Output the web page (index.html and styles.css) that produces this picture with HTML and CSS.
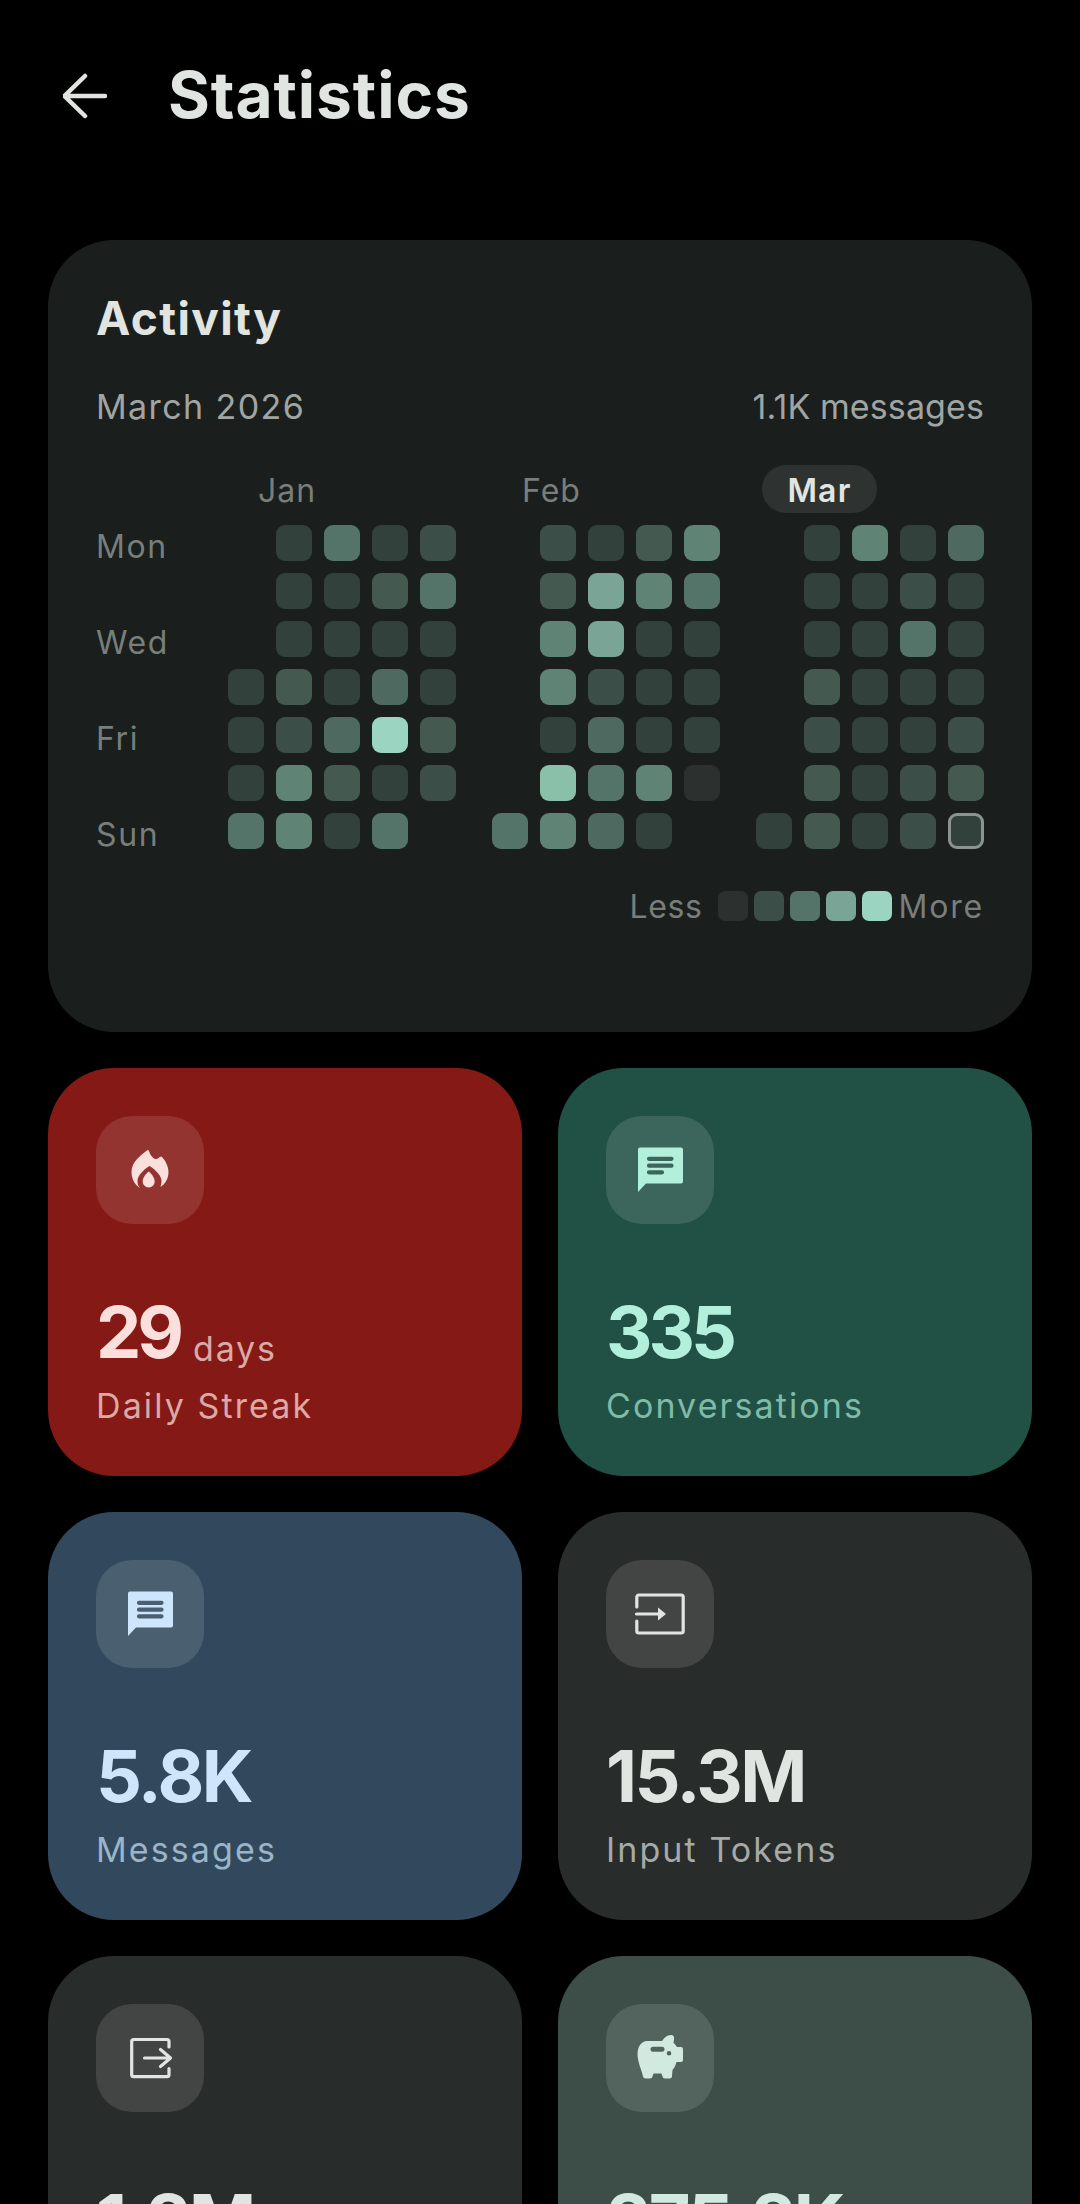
FILE: index.html
```html
<!DOCTYPE html>
<html lang="en">
<head>
  <meta charset="UTF-8" />
  <meta name="viewport" content="width=device-width, initial-scale=1.0" />
  <title>Statistics</title>
  <link rel="stylesheet" href="styles.css">
</head>
<body>
  <header class="topbar">
    <svg class="back" viewBox="0 0 48 48"><path d="M42 24H2M22 4 1.500 24 22 44" /></svg>
    <h1>Statistics</h1>
  </header>

  <section class="activity">
    <h2>Activity</h2>
    <div class="sub"><span class="date">March 2026</span><span>1.1K messages</span></div>

    <div class="heat">
      <div class="days">
        <span>Mon</span><span></span><span>Wed</span><span></span><span>Fri</span><span></span><span>Sun</span>
      </div>
      <div class="month">
        <div class="month-name">Jan</div>
        <div class="weeks">
          <i></i><i></i><i></i><i class="l1"></i><i class="l1"></i><i class="l1"></i><i class="l5"></i>
          <i class="l1"></i><i class="l1"></i><i class="l1"></i><i class="l3"></i><i class="l2"></i><i class="l6"></i><i class="l6"></i>
          <i class="l5"></i><i class="l1"></i><i class="l1"></i><i class="l1"></i><i class="l4"></i><i class="l3"></i><i class="l1"></i>
          <i class="l1"></i><i class="l3"></i><i class="l1"></i><i class="l4"></i><i class="l9"></i><i class="l1"></i><i class="l5"></i>
          <i class="l2"></i><i class="l5"></i><i class="l1"></i><i class="l1"></i><i class="l3"></i><i class="l2"></i><i></i>
        </div>
      </div>
      <div class="month">
        <div class="month-name">Feb</div>
        <div class="weeks">
          <i></i><i></i><i></i><i></i><i></i><i></i><i class="l5"></i>
          <i class="l2"></i><i class="l3"></i><i class="l6"></i><i class="l6"></i><i class="l1"></i><i class="l8"></i><i class="l6"></i>
          <i class="l1"></i><i class="l7"></i><i class="l7"></i><i class="l2"></i><i class="l4"></i><i class="l5"></i><i class="l4"></i>
          <i class="l3"></i><i class="l6"></i><i class="l1"></i><i class="l1"></i><i class="l1"></i><i class="l6"></i><i class="l1"></i>
          <i class="l6"></i><i class="l5"></i><i class="l1"></i><i class="l1"></i><i class="l1"></i><i class="l0"></i><i></i>
        </div>
      </div>
      <div class="month">
        <div class="month-name current"><span>Mar</span></div>
        <div class="weeks">
          <i></i><i></i><i></i><i></i><i></i><i></i><i class="l1"></i>
          <i class="l1"></i><i class="l1"></i><i class="l1"></i><i class="l3"></i><i class="l2"></i><i class="l3"></i><i class="l3"></i>
          <i class="l6"></i><i class="l1"></i><i class="l1"></i><i class="l1"></i><i class="l1"></i><i class="l1"></i><i class="l1"></i>
          <i class="l1"></i><i class="l2"></i><i class="l5"></i><i class="l1"></i><i class="l1"></i><i class="l2"></i><i class="l2"></i>
          <i class="l4"></i><i class="l1"></i><i class="l1"></i><i class="l1"></i><i class="l2"></i><i class="l3"></i><i class="l1 today"></i>
        </div>
      </div>
    </div>

    <div class="legend">
      <span class="less">Less</span>
      <i class="l0"></i><i class="l2"></i><i class="l5"></i><i class="l7"></i><i class="l9"></i>
      <span class="more">More</span>
    </div>
  </section>

  <section class="stats">
    <div class="stat red">
      <div class="icon">
        <svg viewBox="0 0 48 48"><path d="M21.5 4C23 4 23.5 6 24 8C26 11 28 13 30 13C32 13 33 11 35.5 10.5C39 14 42.5 20 42.5 26C42.5 33 39 38 34.5 41C35 39 35.5 37 35.5 35C35.5 30 30 24 23.5 20C17 24 11.5 30 11.5 35C11.5 37.5 12 40 14 42C9 39 5.5 33 5.5 26C5.5 16 14 10 21.5 4z" /><path d="M22.7 25.5C26 28 28.7 32 28.7 35.5a6 6 0 0 1-12 0C16.7 32 19.5 28 22.7 25.5z" /></svg>
      </div>
      <div class="value tight">29<small>days</small></div>
      <div class="label">Daily Streak</div>
    </div>
    <div class="stat green">
      <div class="icon">
        <svg viewBox="0 0 48 48"><path fill-rule="evenodd" d="M2 3.5a2 2 0 0 1 2-2h41a2 2 0 0 1 2 2v32a2 2 0 0 1-2 2H10L2 46zM13 10.7a2.1 2.1 0 0 0 0 4.2h22.500a2.1 2.1 0 0 0 0-4.200zM13 17.600a2.1 2.1 0 0 0 0 4.200h22.500a2.1 2.1 0 0 0 0-4.200zM13 24.200a2.1 2.1 0 0 0 0 4.200h13a2.1 2.1 0 0 0 0-4.200z" /></svg>
      </div>
      <div class="value tight">335</div>
      <div class="label">Conversations</div>
    </div>
    <div class="stat blue">
      <div class="icon">
        <svg viewBox="0 0 48 48"><path fill-rule="evenodd" d="M2 3.5a2 2 0 0 1 2-2h41a2 2 0 0 1 2 2v32a2 2 0 0 1-2 2H10L2 46zM13 10.7a2.1 2.1 0 0 0 0 4.2h22.500a2.1 2.1 0 0 0 0-4.200zM13 17.600a2.1 2.1 0 0 0 0 4.200h22.500a2.1 2.1 0 0 0 0-4.200zM13 24.200a2.1 2.1 0 0 0 0 4.200h22.500a2.1 2.1 0 0 0 0-4.200z" /></svg>
      </div>
      <div class="value">5.8K</div>
      <div class="label">Messages</div>
    </div>
    <div class="stat grey">
      <div class="icon">
        <svg class="line" viewBox="0 0 48 48"><path d="M.8 17V7a2 2 0 0 1 2-2h42.400a2 2 0 0 1 2 2v34a2 2 0 0 1-2 2H2.800a2 2 0 0 1-2-2V31M.5 24H22" /><path class="tip" d="M22 17.500l8 6.500-8 6.500z" /></svg>
      </div>
      <div class="value">15.3M</div>
      <div class="label">Input Tokens</div>
    </div>
    <div class="stat grey">
      <div class="icon">
        <svg class="line" viewBox="0 0 48 48"><path d="M43 13V7.500a2 2 0 0 0-2-2H7.700a2 2 0 0 0-2 2v33.200a2 2 0 0 0 2 2H41a2 2 0 0 0 2-2V34.500M18.500 24H44M34.500 15.500 44.500 24l-10 8.500" /></svg>
      </div>
      <div class="value">1.2M</div>
    </div>
    <div class="stat sage">
      <div class="icon">
        <svg viewBox="0 0 48 48"><path fill-rule="evenodd" d="M11 7H26C28 4 31 1 35 1C37.500 1 38.500 3 38 5L37.500 9C39 10 40 11.500 41 13H45a2 2 0 0 1 2 2V26a2 2 0 0 1-2 2H40.500C39.500 31 38.500 34 36.500 36L36 42a2.500 2.500 0 0 1-2.500 2.500H29a2.500 2.500 0 0 1-2.500-2L25.500 39.500H17.500L16.500 42.500a2.500 2.500 0 0 1-2.500 2H9.500a2.500 2.500 0 0 1-2.500-2C6 37 1.500 28 1.500 20C1.500 12 6 7 11 7zM17 12.700a2.500 2.500 0 0 0 0 5h9a2.500 2.500 0 0 0 0-5zM33 17a2.300 2.300 0 1 0 0 4.600 2.300 2.300 0 0 0 0-4.600z" /></svg>
      </div>
      <div class="value">275.2K</div>
    </div>
  </section>
</body>
</html>
```

FILE: styles.css
```css
html, body {
  height: 2204px;
  overflow: hidden;
}
body {
  font-family: "Inter", "Noto Sans", sans-serif;
  background: #000;
  color: #e1e5e2;
  margin: 0;
  padding: 0 48px;
}
.topbar {
  height: 190px;
  display: flex;
  align-items: center;
}
.back {
  width: 48px;
  height: 48px;
  margin: 2px 57px 0 15px;
  fill: none;
  stroke: #e1e5e2;
  stroke-width: 4.5;
  stroke-linecap: round;
  stroke-linejoin: round;
}
h1 {
  margin: 0;
  font-size: 64px;
  font-weight: 700;
  line-height: 1;
  letter-spacing: 0.9px;
}
.activity {
  height: 792px;
  box-sizing: border-box;
  margin-top: 50px;
  padding: 51px 48px 48px;
  background: #1a1e1d;
  border-radius: 66px;
}
h2 {
  margin: 0;
  font-size: 46px;
  font-weight: 700;
  line-height: 54px;
  letter-spacing: 1.4px;
}
.sub {
  display: flex;
  justify-content: space-between;
  margin-top: 41px;
  font-size: 34px;
  line-height: 42px;
  letter-spacing: 0.1px;
  color: #a0a5a2;
}
.date {
  letter-spacing: 1.4px;
}
.heat {
  display: flex;
  margin-top: 37px;
}
.days {
  width: 132px;
  padding-top: 60px;
  display: grid;
  grid-template-rows: repeat(7, 36px);
  row-gap: 12px;
  font-size: 32px;
  letter-spacing: 1.6px;
  color: #787e7b;
}
.days span {
  line-height: 43px;
  height: 36px;
}
.month {
  margin-right: 36px;
}
.month:last-child {
  margin-right: 0;
}
.month-name {
  height: 48px;
  margin-bottom: 12px;
  padding-left: 30px;
  font-size: 32px;
  line-height: 52px;
  letter-spacing: 1px;
  color: #787e7b;
}
.month-name.current {
  padding-left: 6px;
  font-weight: 600;
  letter-spacing: 1.2px;
  color: #e1e5e2;
}
.month-name.current span {
  display: inline-block;
  width: 115px;
  height: 48px;
  text-align: center;
  border-radius: 24px;
  background: #2e3231;
}
.weeks {
  display: grid;
  grid-template-rows: repeat(7, 36px);
  grid-auto-columns: 36px;
  grid-auto-flow: column;
  gap: 12px;
}
.weeks i, .legend i {
  display: block;
  box-sizing: border-box;
  border-radius: 9px;
}
.l0 { background: #2c302f; }
.l1 { background: #32413c; }
.l2 { background: #3b4e47; }
.l3 { background: #445a51; }
.l4 { background: #4e6a60; }
.l5 { background: #557469; }
.l6 { background: #5f8375; }
.l7 { background: #7aa596; }
.l8 { background: #8abfa9; }
.l9 { background: #9bd5c2; }
.weeks i.today {
  border: 3px solid #8c9490;
}
.legend {
  display: flex;
  align-items: center;
  justify-content: flex-end;
  gap: 6px;
  margin-top: 39px;
  height: 36px;
  font-size: 32px;
  color: #787e7b;
}
.legend i {
  width: 30px;
  height: 30px;
  border-radius: 7px;
}
.less {
  margin-right: 9px;
  letter-spacing: 0.6px;
}
.more {
  margin-left: 1px;
  letter-spacing: 1.8px;
}
.stats {
  display: grid;
  grid-template-columns: 474px 474px;
  grid-auto-rows: 408px;
  gap: 36px;
  margin-top: 36px;
}
.stat {
  box-sizing: border-box;
  padding: 48px;
  border-radius: 66px;
  color: var(--fg);
  background: var(--bg);
}
.icon {
  width: 108px;
  height: 108px;
  display: flex;
  align-items: center;
  justify-content: center;
  border-radius: 36px;
  background: rgba(255, 255, 255, 0.12);
}
.icon svg {
  width: 48px;
  height: 48px;
  overflow: visible;
  fill: var(--fg);
}
.icon svg.line {
  fill: none;
  stroke: var(--fg);
  stroke-width: 3.2;
  stroke-linecap: round;
  stroke-linejoin: round;
}
.icon svg.line .tip {
  fill: var(--fg);
  stroke: none;
}
.value {
  height: 72px;
  margin-top: 72px;
  font-size: 72px;
  font-weight: 700;
  line-height: 72px;
  letter-spacing: -2.5px;
}
.value.tight {
  letter-spacing: -4px;
}
.value small {
  margin-left: 13px;
  font-size: 34px;
  font-weight: 400;
  letter-spacing: 1.8px;
  vertical-align: -3px;
  color: var(--sub);
}
.label {
  margin-top: 17px;
  font-size: 34px;
  line-height: 42px;
  letter-spacing: 2.1px;
  color: var(--sub);
}
.red { --bg: #851915; --fg: #fadfdc; --sub: #dba9a6; }
.green { --bg: #215145; --fg: #b2f0db; --sub: #7fbba8; }
.blue { --bg: #32495d; --fg: #cde6fc; --sub: #9ab5c9; }
.grey { --bg: #282c2b; --fg: #e1e5e2; --sub: #a5aaa7; }
.sage { --bg: #3c4e47; --fg: #d2e9df; --sub: #a5bdb3; }
```
